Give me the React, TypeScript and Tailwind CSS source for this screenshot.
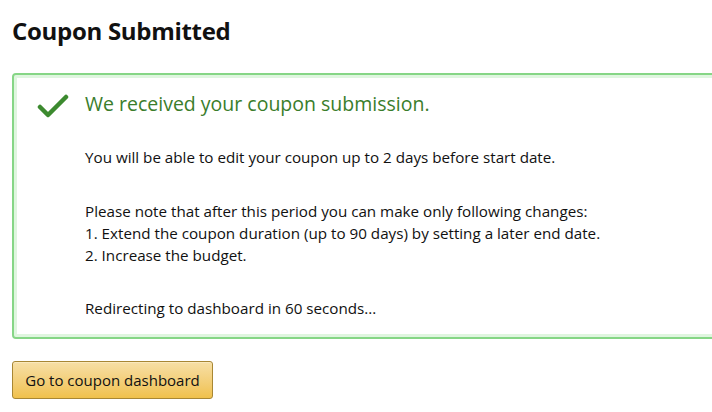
export default function App() {
  return (
    <div className="h-[412px] w-[712px] overflow-hidden bg-white pl-3 pt-[17px] text-[#111] [font-family:'Open_Sans',Arial,sans-serif]">
      <h1 className="text-[24px] font-bold leading-7 tracking-[-0.3px]">Coupon Submitted</h1>

      <div className="mt-[28px] h-[266px] w-[720px] rounded-[4px] border-2 border-[#86d686] shadow-[inset_0_0_0_3px_#dff6df]">
        <div className="flex items-start pl-[23px] pt-[17px]">
          <svg width="32" height="24" viewBox="0 0 32 24" className="mt-[2px] shrink-0">
            <path d="M3 13 L11 21 L29 3" fill="none" stroke="#3c8a2f" strokeWidth="4.5" strokeLinecap="round" strokeLinejoin="round" />
          </svg>
          <div className="ml-[16px]">
            <p className="text-[19.5px] leading-6 text-[#3a7d2b]">We received your coupon submission.</p>
            <div className="mt-[30px] text-[15.2px] leading-[22px] text-[#111]">
              <p>You will be able to edit your coupon up to 2 days before start date.</p>
              <p className="mt-[32px]">Please note that after this period you can make only following changes:</p>
              <p>1. Extend the coupon duration (up to 90 days) by setting a later end date.</p>
              <p>2. Increase the budget.</p>
              <p className="mt-[31px]">Redirecting to dashboard in 60 seconds...</p>
            </div>
          </div>
        </div>
      </div>

      <button
        type="button"
        className="mt-[22px] h-[38px] w-[201px] rounded-[3px] border border-[#a88734] bg-gradient-to-b from-[#f7dfa5] to-[#f0c14b] text-[15px] text-[#111] shadow-[inset_0_1px_0_#fbe9bd]"
      >
        Go to coupon dashboard
      </button>
    </div>
  );
}
